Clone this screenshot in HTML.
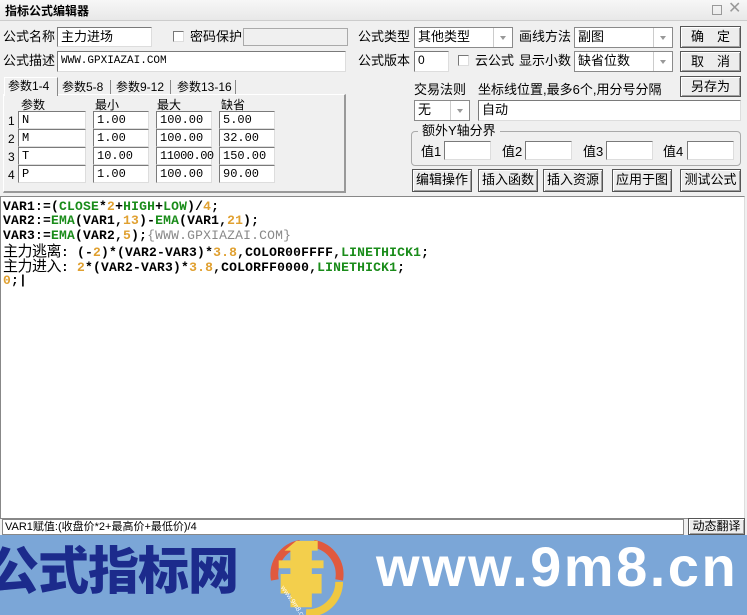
<!DOCTYPE html>
<html><head><meta charset="utf-8"><style>
*{box-sizing:border-box;margin:0;padding:0}
body{width:747px;height:615px;overflow:hidden;background:#f0f0f0;font-family:"Liberation Sans","Noto Sans CJK SC",sans-serif;font-size:12px;color:#000;position:relative}
.a{position:absolute}
.t{position:absolute;font-size:13px;line-height:16px;white-space:nowrap}
.in{position:absolute;background:#fff;border:1px solid #7a7a7a;border-right-color:#ddd;border-bottom-color:#ddd;font-size:12px;line-height:16px;padding-left:3px;white-space:nowrap;font-family:"Liberation Mono","Noto Sans CJK SC",monospace}
.sel{position:absolute;background:#fff;border:1px solid #8a8a8a;font-size:13px;line-height:18px;padding-left:3px}
.sel:after{content:"";position:absolute;right:0;top:0;width:18px;height:100%;border-left:1px solid #ccc;background:#fff}
.sel i{position:absolute;right:6px;top:8px;border:3px solid transparent;border-top:4px solid #999;z-index:2}
.btn{position:absolute;background:#ededed;border:1px solid #555;box-shadow:inset 1px 1px #fff,inset -1px -1px #a0a0a0;font-size:13px;text-align:center;line-height:20px}
.cb{position:absolute;width:11px;height:11px;border:1px solid #777;border-right-color:#ddd;border-bottom-color:#ddd;background:#fff}
.code{position:absolute;left:3px;height:15px;overflow:visible;font-family:"Liberation Mono","Noto Sans CJK SC",monospace;font-weight:bold;font-size:13px;line-height:15px;white-space:pre;letter-spacing:.2px}
.code b{font-weight:normal;font-family:'Noto Sans CJK SC';font-size:15px;line-height:15px;letter-spacing:-.5px}
.g{color:#1a8c1a}.o{color:#e0a030}.gr{color:#888;font-weight:normal}
</style></head><body>
<div class="a" style="left:0;top:0;width:747px;height:21px;background:linear-gradient(#f7f7f7,#e8e8e8);border-bottom:1px solid #ccc"></div>
<div class="t" style="left:5px;top:3px;font-weight:bold;font-size:12px">指标公式编辑器</div>
<div class="a" style="left:712px;top:5px;width:10px;height:10px;border:1px solid #999"></div>
<div class="t" style="left:728px;top:1px;color:#999;font-size:16px">✕</div>

<div class="t" style="left:3px;top:29px">公式名称</div>
<div class="in" style="left:57px;top:27px;width:95px;height:20px;font-family:'Noto Sans CJK SC';font-size:13px">主力进场</div>
<div class="cb" style="left:173px;top:31px"></div>
<div class="t" style="left:190px;top:29px">密码保护</div>
<div class="a" style="left:243px;top:28px;width:105px;height:18px;border:1px solid #aaa;background:#f0f0f0"></div>
<div class="t" style="left:358px;top:29px">公式类型</div>
<div class="sel" style="left:414px;top:27px;width:99px;height:21px">其他类型<i></i></div>
<div class="t" style="left:519px;top:29px">画线方法</div>
<div class="sel" style="left:574px;top:27px;width:99px;height:21px">副图<i></i></div>
<div class="btn" style="left:680px;top:26px;width:61px;height:22px">确　定</div>

<div class="t" style="left:3px;top:53px">公式描述</div>
<div class="in" style="left:57px;top:51px;width:289px;height:21px;font-size:11px;line-height:18px">WWW.GPXIAZAI.COM</div>
<div class="t" style="left:358px;top:53px">公式版本</div>
<div class="in" style="left:414px;top:51px;width:35px;height:21px;font-family:'Liberation Sans'">0</div>
<div class="cb" style="left:458px;top:55px"></div>
<div class="t" style="left:475px;top:53px">云公式</div>
<div class="t" style="left:519px;top:53px">显示小数</div>
<div class="sel" style="left:574px;top:51px;width:99px;height:21px">缺省位数<i></i></div>
<div class="btn" style="left:680px;top:51px;width:61px;height:21px">取　消</div>

<div class="a" style="left:3px;top:94px;width:343px;height:99px;border:1px solid #fff;border-right:2px solid #999;border-bottom:2px solid #999"></div>
<div class="a" style="left:4px;top:77px;width:54px;height:19px;background:#f0f0f0;border:1px solid #fff;border-bottom:none;border-right:1px solid #888"></div>
<div class="t" style="left:8px;top:78px;font-size:12px">参数1-4</div>
<div class="t" style="left:62px;top:79px;font-size:12px">参数5-8</div>
<div class="a" style="left:110px;top:80px;width:1px;height:14px;background:#888"></div>
<div class="t" style="left:116px;top:79px;font-size:12px">参数9-12</div>
<div class="a" style="left:170px;top:80px;width:1px;height:14px;background:#888"></div>
<div class="t" style="left:177px;top:79px;font-size:12px">参数13-16</div>
<div class="a" style="left:235px;top:80px;width:1px;height:14px;background:#888"></div>

<div class="t" style="left:21px;top:97px;font-size:12px">参数</div>
<div class="t" style="left:95px;top:97px;font-size:12px">最小</div>
<div class="t" style="left:157px;top:97px;font-size:12px">最大</div>
<div class="t" style="left:221px;top:97px;font-size:12px">缺省</div>

<div class="t" style="left:8px;top:113px;font-size:12px">1</div>
<div class="in" style="left:18px;top:111px;width:68px;height:18px">N</div>
<div class="in" style="left:93px;top:111px;width:56px;height:18px">1.00</div>
<div class="in" style="left:156px;top:111px;width:56px;height:18px">100.00</div>
<div class="in" style="left:219px;top:111px;width:56px;height:18px">5.00</div>
<div class="t" style="left:8px;top:131px;font-size:12px">2</div>
<div class="in" style="left:18px;top:129px;width:68px;height:18px">M</div>
<div class="in" style="left:93px;top:129px;width:56px;height:18px">1.00</div>
<div class="in" style="left:156px;top:129px;width:56px;height:18px">100.00</div>
<div class="in" style="left:219px;top:129px;width:56px;height:18px">32.00</div>
<div class="t" style="left:8px;top:149px;font-size:12px">3</div>
<div class="in" style="left:18px;top:147px;width:68px;height:18px">T</div>
<div class="in" style="left:93px;top:147px;width:56px;height:18px">10.00</div>
<div class="in" style="left:156px;top:147px;width:56px;height:18px;letter-spacing:-.5px">11000.00</div>
<div class="in" style="left:219px;top:147px;width:56px;height:18px">150.00</div>
<div class="t" style="left:8px;top:167px;font-size:12px">4</div>
<div class="in" style="left:18px;top:165px;width:68px;height:18px">P</div>
<div class="in" style="left:93px;top:165px;width:56px;height:18px">1.00</div>
<div class="in" style="left:156px;top:165px;width:56px;height:18px">100.00</div>
<div class="in" style="left:219px;top:165px;width:56px;height:18px">90.00</div>

<div class="btn" style="left:680px;top:76px;width:61px;height:21px">另存为</div>
<div class="t" style="left:414px;top:82px">交易法则</div>
<div class="t" style="left:478px;top:82px">坐标线位置,最多6个,用分号分隔</div>
<div class="sel" style="left:414px;top:100px;width:56px;height:21px">无<i></i></div>
<div class="in" style="left:478px;top:100px;width:263px;height:21px;font-family:'Noto Sans CJK SC';font-size:13px">自动</div>
<div class="a" style="left:411px;top:131px;width:330px;height:35px;border:1px solid #aaa;border-radius:4px"></div>
<div class="t" style="left:418px;top:123px;background:#f0f0f0;padding:0 4px">额外Y轴分界</div>
<div class="t" style="left:421px;top:144px">值1</div><div class="in" style="left:444px;top:141px;width:47px;height:19px"></div>
<div class="t" style="left:502px;top:144px">值2</div><div class="in" style="left:525px;top:141px;width:47px;height:19px"></div>
<div class="t" style="left:583px;top:144px">值3</div><div class="in" style="left:606px;top:141px;width:47px;height:19px"></div>
<div class="t" style="left:663px;top:144px">值4</div><div class="in" style="left:687px;top:141px;width:47px;height:19px"></div>
<div class="btn" style="left:412px;top:169px;width:60px;height:23px">编辑操作</div>
<div class="btn" style="left:478px;top:169px;width:60px;height:23px">插入函数</div>
<div class="btn" style="left:543px;top:169px;width:60px;height:23px">插入资源</div>
<div class="btn" style="left:612px;top:169px;width:60px;height:23px">应用于图</div>
<div class="btn" style="left:680px;top:169px;width:61px;height:23px">测试公式</div>

<div class="a" style="left:0;top:196px;width:745px;height:323px;background:#fff;border:1px solid #888;border-right-color:#ddd"></div>
<div class="code" style="top:199px">VAR1:=(<span class="g">CLOSE</span>*<span class="o">2</span>+<span class="g">HIGH</span>+<span class="g">LOW</span>)/<span class="o">4</span>;</div>
<div class="code" style="top:213px">VAR2:=<span class="g">EMA</span>(VAR1,<span class="o">13</span>)-<span class="g">EMA</span>(VAR1,<span class="o">21</span>);</div>
<div class="code" style="top:228px">VAR3:=<span class="g">EMA</span>(VAR2,<span class="o">5</span>);<span class="gr">{WWW.GPXIAZAI.COM}</span></div>
<div class="code" style="top:243px"><b>主力逃离</b>: (-<span class="o">2</span>)*(VAR2-VAR3)*<span class="o">3.8</span>,COLOR00FFFF,<span class="g">LINETHICK1</span>;</div>
<div class="code" style="top:258px"><b>主力进入</b>: <span class="o">2</span>*(VAR2-VAR3)*<span class="o">3.8</span>,COLORFF0000,<span class="g">LINETHICK1</span>;</div>
<div class="code" style="top:273px"><span class="o">0</span>;|</div>

<div class="a" style="left:2px;top:519px;width:682px;height:16px;background:#fff;border:1px solid #888;font-size:11px;line-height:14px;padding-left:2px;font-family:'Liberation Sans','Noto Sans CJK SC'">VAR1赋值:(收盘价*2+最高价+最低价)/4</div>
<div class="btn" style="left:688px;top:518px;width:57px;height:17px;font-size:12px;line-height:15px">动态翻译</div>

<div class="a" style="left:0;top:535px;width:747px;height:80px;background:#7ba6d7"></div>
<div class="a" style="left:-12px;top:538px;font-family:'Noto Sans CJK SC',sans-serif;font-weight:900;font-size:51px;line-height:58px;color:#1c2b8c;white-space:nowrap;letter-spacing:-1px">公式指标网</div>
<svg class="a" style="left:266px;top:537px" width="80" height="78" viewBox="0 0 80 80">
<path d="M8 44 A32 32 0 0 1 34 7" fill="none" stroke="#e0593e" stroke-width="8"/>
<path d="M48 7 A32 32 0 0 1 74 44" fill="none" stroke="#e0593e" stroke-width="8"/>
<path d="M74 46 A32 32 0 0 1 40 78" fill="none" stroke="#f0c840" stroke-width="8"/>
<path d="M30 4 h22 v10 h-6 v10 h12 v8 h-12 v6 h10 v20 h-10 v14 h-22 v-14 h-10 v-20 h10 v-6 h-12 v-8 h12 v-10 h-6z" fill="#f3cf4c"/>
<text x="14" y="52" font-size="7" fill="#fff" font-family="Liberation Sans" transform="rotate(55 14 52)">www.9m8.cn</text>
</svg>
<div class="a" style="left:376px;top:534px;font-family:'Liberation Sans',sans-serif;font-weight:bold;font-size:56px;line-height:66px;color:#fff;white-space:nowrap;letter-spacing:2.5px">www.9m8.cn</div>
</body></html>
